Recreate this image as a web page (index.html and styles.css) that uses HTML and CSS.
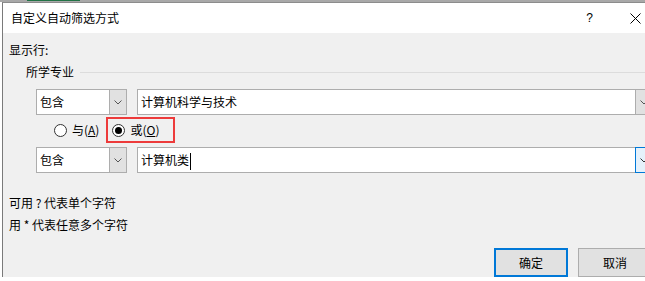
FILE: index.html
```html
<!DOCTYPE html>
<html lang="zh-CN">
<head>
<meta charset="utf-8">
<title>自定义自动筛选方式</title>
<link rel="stylesheet" href="styles.css">
</head>
<body>
<div class="backdrop">
  <div class="green-tab"></div>
</div>
<div class="window">
  <div class="titlebar">
    <span class="title">自定义自动筛选方式</span>
    <span class="help">?</span>
    <svg class="close" width="11" height="11" viewBox="0 0 11 11"><path d="M0.5 0.5 L10.5 10.5 M10.5 0.5 L0.5 10.5" stroke="#000" stroke-width="1" fill="none"/></svg>
  </div>
  <div class="content">
    <div class="line">显示行:</div>
    <div class="group-label">
      <span>所学专业</span>
      <div class="group-rule"></div>
    </div>
    <div class="crit-row">
      <div class="combo">
        <div class="combo-text">包含</div>
        <div class="drop"><svg width="8" height="5" viewBox="0 0 8 5"><path d="M0.5 0.5 L4 4 L7.5 0.5" stroke="#555" fill="none"/></svg></div>
      </div>
      <div class="field">
        <div class="field-text">计算机科学与技术</div>
        <div class="drop"><svg width="8" height="5" viewBox="0 0 8 5"><path d="M0.5 0.5 L4 4 L7.5 0.5" stroke="#555" fill="none"/></svg></div>
      </div>
    </div>
    <div class="radio-row">
      <label class="radio"><span class="circle"></span><span>与(<u>A</u>)</span></label>
      <div class="highlight">
        <label class="radio"><span class="circle checked"></span><span>或(<u>O</u>)</span></label>
      </div>
    </div>
    <div class="crit-row">
      <div class="combo">
        <div class="combo-text">包含</div>
        <div class="drop"><svg width="8" height="5" viewBox="0 0 8 5"><path d="M0.5 0.5 L4 4 L7.5 0.5" stroke="#555" fill="none"/></svg></div>
      </div>
      <div class="field">
        <div class="field-text">计算机类<span class="caret"></span></div>
        <div class="drop focus"><svg width="8" height="5" viewBox="0 0 8 5"><path d="M0.5 0.5 L4 4 L7.5 0.5" stroke="#333" fill="none"/></svg></div>
      </div>
    </div>
    <div class="hints">
      <div class="line">可用 ? 代表单个字符</div>
      <div class="line">用 * 代表任意多个字符</div>
    </div>
    <div class="buttons">
      <button class="btn primary">确定</button>
      <button class="btn">取消</button>
    </div>
  </div>
</div>
</body>
</html>
```

FILE: styles.css
```css
html, body {
  margin: 0;
  padding: 0;
  overflow: hidden;
  background: #ffffff;
}
body {
  width: 645px;
  height: 281px;
  position: relative;
  font-family: "Noto Sans CJK SC", "Noto Sans", sans-serif;
  font-size: 12px;
  color: #000;
}
.backdrop {
  height: 2px;
  background: #a8a8a8;
  position: relative;
}
.green-tab {
  position: absolute;
  left: 27px;
  top: 0;
  width: 53px;
  height: 1px;
  background: #217346;
}
.window {
  margin-left: 2px;
  width: 658px;
  border-left: 1px solid #7a7a7a;
  border-top: 1px solid #8c8c8c;
}
.titlebar {
  height: 30px;
  background: #fff;
  display: flex;
  align-items: center;
  padding-left: 8px;
}
.title {
  flex: 1;
  line-height: 16px;
}
.help {
  font-family: "Liberation Sans", sans-serif;
  font-size: 12px;
  margin-right: 37px;
}
.close {
  margin-right: 20px;
}
.content {
  background: #f0f0f0;
  padding: 9px 9px 4px 6px;
  height: 244px;
  box-sizing: border-box;
}
.line {
  line-height: 16px;
  height: 16px;
  white-space: nowrap;
}
.group-label {
  display: flex;
  align-items: center;
  margin-top: 6px;
  margin-left: 17px;
  line-height: 16px;
  height: 16px;
}
.group-rule {
  flex: 1;
  height: 1px;
  background: #dcdcdc;
  margin-left: 6px;
  margin-right: -9px;
}
.crit-row {
  display: flex;
  margin-left: 27px;
  height: 26px;
  gap: 10px;
}
.group-label + .crit-row {
  margin-top: 9px;
}
.combo {
  width: 91px;
  display: flex;
  box-sizing: border-box;
  border: 1px solid #adadad;
  background: #fff;
}
.combo-text, .field-text {
  flex: 1;
  line-height: 24px;
  padding-left: 3px;
  white-space: nowrap;
}
.drop {
  width: 17px;
  box-sizing: border-box;
  background: #e1e1e1;
  border-left: 1px solid #adadad;
  display: flex;
  align-items: center;
  justify-content: center;
}
.combo .drop {
  margin: -1px -1px -1px 0;
  border: 1px solid #adadad;
  width: 18px;
}
.field {
  flex: 1;
  display: flex;
  box-sizing: border-box;
  border: 1px solid #adadad;
  background: #fff;
}
.field .drop {
  margin: -1px -1px -1px 0;
  border: 1px solid #adadad;
}
.field .drop.focus {
  border-color: #0078d7;
  background: #e5f1fb;
}
.caret {
  display: inline-block;
  width: 1px;
  height: 17px;
  background: #000;
  vertical-align: middle;
  margin-left: 1px;
}
.radio-row {
  display: flex;
  align-items: center;
  margin: 2px 0 4px 45px;
  height: 26px;
}
.radio {
  display: flex;
  align-items: center;
  gap: 5px;
  line-height: 16px;
}
.radio u {
  text-decoration: underline;
  text-underline-offset: 1px;
}
.circle {
  width: 13px;
  height: 13px;
  box-sizing: border-box;
  border: 1px solid #333;
  border-radius: 50%;
  background: #fff;
  display: flex;
  align-items: center;
  justify-content: center;
}
.circle.checked::after {
  content: "";
  width: 7px;
  height: 7px;
  border-radius: 50%;
  background: #000;
}
.highlight {
  margin-left: 7px;
  height: 26px;
  box-sizing: border-box;
  border: 2px solid #ed3b3b;
  padding: 0 14px 0 4px;
  display: flex;
  align-items: center;
}
.hints {
  margin-top: 22px;
  display: flex;
  flex-direction: column;
  gap: 6px;
}
.buttons {
  display: flex;
  justify-content: flex-end;
  gap: 10px;
  margin-top: 15px;
}
.btn {
  width: 74px;
  height: 29px;
  box-sizing: border-box;
  background: #e1e1e1;
  border: 1px solid #adadad;
  font-family: "Noto Sans CJK SC", "Noto Sans", sans-serif;
  font-size: 12px;
  color: #000;
  padding: 0;
  line-height: 16px;
}
.btn.primary {
  border: 2px solid #0078d7;
}
```
